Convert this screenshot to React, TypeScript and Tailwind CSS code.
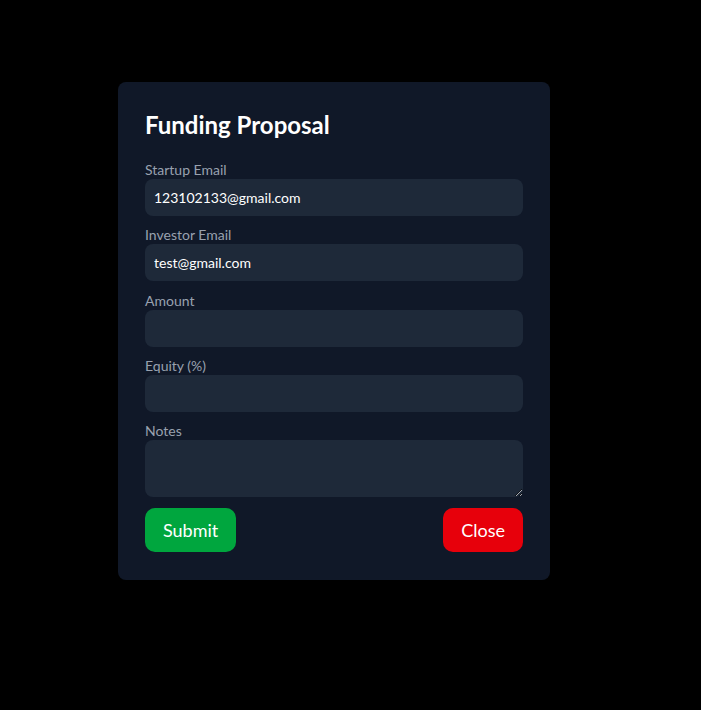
import React from 'react';

const fields = [
  { label: 'Startup Email', value: '123102133@gmail.com' },
  { label: 'Investor Email', value: 'test@gmail.com' },
  { label: 'Amount', value: '' },
  { label: 'Equity (%)', value: '' },
];

export default function App() {
  return (
    <div
      className="min-h-screen w-full bg-black pt-[82px] pl-[118px]"
      style={{ fontFamily: '"Segoe UI", Lato, "Noto Sans", sans-serif' }}
    >
      <div className="w-[432px] rounded-lg bg-[#101828] p-[27px] pb-[28px]">
        <h2 className="text-2xl leading-8 font-bold text-white mb-[18px]">Funding Proposal</h2>

        {fields.map((f) => (
          <div key={f.label} className="mb-[8.3px]">
            <label className="block text-sm leading-5 text-[#99a1af] translate-y-[1px]">{f.label}</label>
            <input
              readOnly
              value={f.value}
              className="block w-full h-[37px] rounded-lg bg-[#1e2939] px-[9px] text-sm text-white outline-none"
            />
          </div>
        ))}

        <div>
          <label className="block text-sm leading-5 text-[#99a1af] translate-y-[1px]">Notes</label>
          <textarea
            readOnly
            className="block w-full h-[57px] rounded-lg bg-[#1e2939] px-[9px] py-2 text-sm text-white outline-none"
          />
        </div>

        <div className="mt-[11px] flex items-center justify-between">
          <button className="h-[44px] rounded-[10px] bg-[#00a63e] px-[18px] text-lg text-white">Submit</button>
          <button className="h-[44px] rounded-[10px] bg-[#e7000b] px-[18px] text-lg text-white">Close</button>
        </div>
      </div>
    </div>
  );
}
